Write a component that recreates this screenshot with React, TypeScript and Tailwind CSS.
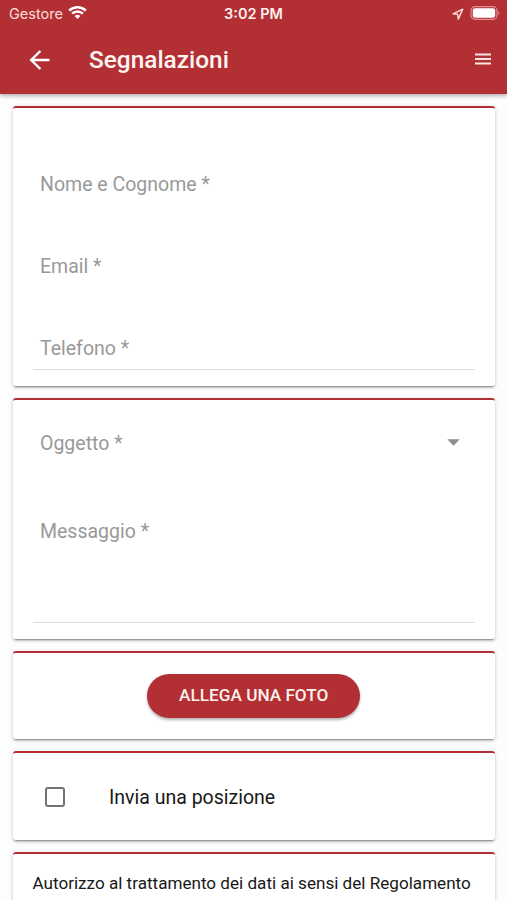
import type { ReactNode } from 'react';

function Card({ className, children }: { className: string; children: ReactNode }) {
  return (
    <section
      className={`rounded-[3px] border-t-[2px] border-[#b23034] bg-white shadow-[0_2px_2px_0_rgba(0,0,0,0.16),0_3px_1px_-2px_rgba(0,0,0,0.25),0_1px_5px_0_rgba(0,0,0,0.14)] ${className}`}
    >
      {children}
    </section>
  );
}

function StatusBar() {
  return (
    <div className="flex h-7 items-center justify-between pl-[9px] pr-[6px]">
      <div className="flex w-[140px] items-center gap-[5px] text-[#fbdcd9]">
        <span className="font-[Inter] text-[14.5px] leading-7">Gestore</span>
        <svg width="19" height="15" viewBox="0 0 19 15" fill="none" stroke="#fff" strokeWidth="2.5" className="-mt-[3px]">
          <path d="M1.2 5.6a11.8 11.8 0 0 1 16.6 0" />
          <path d="M4.1 8.7a7.6 7.6 0 0 1 10.8 0" />
          <path d="M9.5 14 6.6 11.1a4.1 4.1 0 0 1 5.8 0z" fill="#fff" stroke="none" />
        </svg>
      </div>
      <span className="-ml-[3px] font-[Inter] text-[14.5px] leading-7 font-semibold text-[#fff0ee]">3:02 PM</span>
      <div className="flex w-[140px] items-center justify-end gap-[6px]">
        <svg width="12" height="12" viewBox="0 0 12 12" fill="none" stroke="#fbdcd9" strokeWidth="1.4" strokeLinejoin="round">
          <path d="M10.7 1.1 1 5.8l4.7.5.6 4.8z" />
        </svg>
        <svg width="31" height="14" viewBox="0 0 31 14" className="-mt-[2px]">
          <rect x="1" y=".7" width="26" height="12.6" rx="3.8" fill="none" stroke="#dd9090" strokeWidth="1.2" />
          <rect x="2.8" y="2.2" width="22.4" height="9.6" rx="2.2" fill="#fff" />
          <path d="M28.4 4.8q2.2 2.2 0 4.4z" fill="#dd9090" />
        </svg>
      </div>
    </div>
  );
}

export default function App() {
  return (
    <div className="h-[900px] overflow-hidden bg-[#fdfdfd] font-[Roboto,sans-serif]">
      <header className="h-[94px] bg-[#b23034] text-white shadow-[0_2px_4px_rgba(0,0,0,0.3)]">
        <StatusBar />
        <div className="flex h-[64px] items-center pl-[29px] pr-4">
          <svg width="21" height="20" viewBox="0 0 21 20" fill="none" stroke="#fff" strokeWidth="2.4">
            <path d="M20.5 10H3M11.4 1 2.2 10l9.2 9" />
          </svg>
          <h1 className="ml-[39px] flex-1 text-[24.4px] leading-8 font-medium text-[#fff4f2]">Segnalazioni</h1>
          <svg width="16" height="12" viewBox="0 0 16 12" fill="none" stroke="#fbe3e0" strokeWidth="2" className="-mt-[3px]">
            <path d="M0 1.6h16M0 6.1h16M0 10.6h16" />
          </svg>
        </div>
      </header>

      <main className="flex flex-col pt-[12px] pr-[12.5px] pl-[13px] text-[19.5px] leading-6 text-[#999]">
        <Card className="h-[280px] px-5">
          <div className="pt-[65px] pl-[7px]">Nome e Cognome *</div>
          <div className="pt-[58px] pl-[7px]">Email *</div>
          <div className="border-b border-[#dedede] pt-[58px] pb-[8px] pl-[7px]">Telefono *</div>
        </Card>

        <Card className="mt-[12px] h-[241px] px-5">
          <div className="flex items-center justify-between pt-[32px] pr-[15px] pl-[7px]">
            <span>Oggetto *</span>
            <svg width="13" height="7" viewBox="0 0 13 7" fill="#8e8e8e" className="-mt-[3px]">
              <path d="M.3.3h12.4L6.5 6.7z" />
            </svg>
          </div>
          <div className="mt-[64px] h-[103px] border-b border-[#dedede] pl-[7px]">Messaggio *</div>
        </Card>

        <Card className="mt-[12px] flex h-[88px] justify-center pt-[21px]">
          <button className="h-[44px] w-[213px] rounded-full bg-[#b23034] pb-[3px] text-[17.2px] font-medium text-[#fff0ee] shadow-[0_2px_3px_rgba(0,0,0,0.3)]">
            ALLEGA UNA FOTO
          </button>
        </Card>

        <Card className="mt-[12px] flex h-[89px] items-center pl-8 text-[#181818]">
          <span className="size-5 rounded-[3px] border-2 border-[#737373]" />
          <span className="ml-[44px] pt-[3px]">Invia una posizione</span>
        </Card>

        <Card className="mt-[12px] h-[100px] shrink-0 pt-[17px] pl-[19.5px] text-[17.1px] whitespace-nowrap text-[#181818]">
          Autorizzo al trattamento dei dati ai sensi del Regolamento
        </Card>
      </main>
    </div>
  );
}
